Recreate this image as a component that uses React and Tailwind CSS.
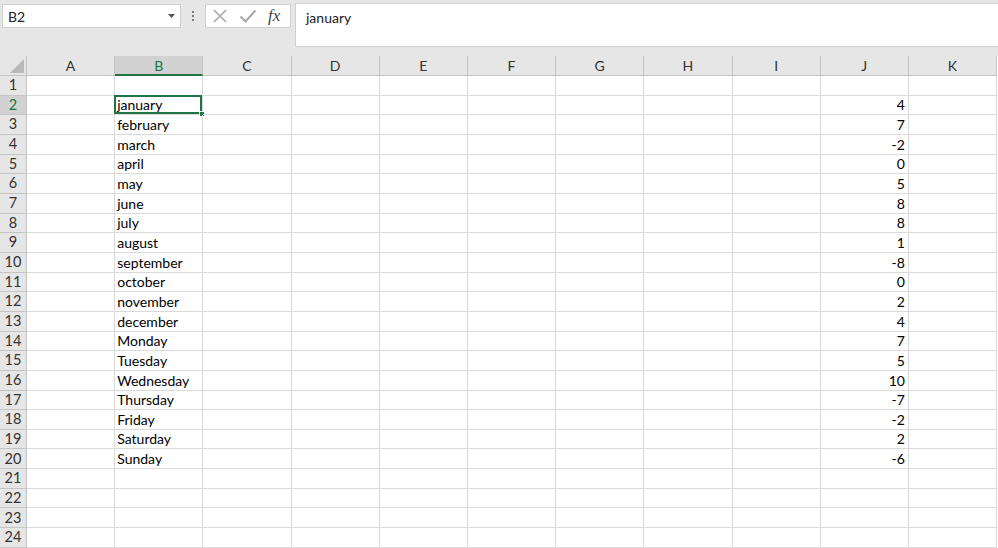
import React from 'react';

const COLS = ['A', 'B', 'C', 'D', 'E', 'F', 'G', 'H', 'I', 'J', 'K'];

const NAMES = [
  'january', 'february', 'march', 'april', 'may', 'june', 'july', 'august',
  'september', 'october', 'november', 'december',
  'Monday', 'Tuesday', 'Wednesday', 'Thursday', 'Friday', 'Saturday', 'Sunday',
];
const VALUES = [4, 7, -2, 0, 5, 8, 8, 1, -8, 0, 2, 4, 7, 5, 10, -7, -2, 2, -6];

const FormulaBar = () => (
  <div className="h-[56px] bg-[#e6e6e6] flex items-start pl-[2px] pt-[4px]">
    {/* Name box */}
    <div className="w-[179px] h-[24px] bg-white border border-[#d0d0d0] flex items-center justify-between pl-[5px] pr-[5px] text-[14px] text-[#222]">
      <span>B2</span>
      <svg width="7" height="4" viewBox="0 0 7 4">
        <path d="M0 0 L7 0 L3.5 4 Z" fill="#555" />
      </svg>
    </div>

    {/* Grip dots */}
    <div className="w-[24px] h-[24px] flex flex-col items-center justify-center gap-[2px]">
      <span className="w-[2px] h-[2px] bg-[#777]" />
      <span className="w-[2px] h-[2px] bg-[#777]" />
      <span className="w-[2px] h-[2px] bg-[#777]" />
    </div>

    {/* Cancel / enter / fx */}
    <div className="w-[86px] h-[24px] bg-white border border-[#d0d0d0] flex items-center pl-[6px] gap-[11px]">
      <svg width="16" height="16" viewBox="0 0 16 16">
        <path d="M2 2 L14 14 M14 2 L2 14" stroke="#a8a8a8" strokeWidth="1.6" fill="none" />
      </svg>
      <svg width="18" height="16" viewBox="0 0 18 16">
        <path d="M1.5 8.5 L6.5 13.5 L16.5 2.5" stroke="#a8a8a8" strokeWidth="2.2" fill="none" />
      </svg>
      <span className="font-['Liberation_Serif',serif] italic text-[17px] text-[#444] leading-none -mt-[2px]">fx</span>
    </div>

    {/* Formula input */}
    <div className="ml-[4px] -mt-[1px] flex-1 h-[44px] bg-white border border-[#d0d0d0] border-r-0 pl-[10px] pt-[3px] text-[14px] text-[#222]">
      january
    </div>
  </div>
);

const HeaderRow = () => (
  <div className="flex h-[20px]">
    <div className="w-[27px] shrink-0 bg-[#e6e6e6] border-r border-b border-[#c4c4c4] flex items-end justify-end p-[2px]">
      <svg width="14" height="14" viewBox="0 0 14 14">
        <path d="M14 0 L14 14 L0 14 Z" fill="#b9b9b9" />
      </svg>
    </div>
    {COLS.map((c) => {
      const sel = c === 'B';
      return (
        <div
          key={c}
          className={`w-[88.2px] shrink-0 flex items-center justify-center text-[14px] border-r ${
            sel
              ? 'bg-[#d2d2d2] text-[#217346] border-[#c4c4c4] border-b-2 border-b-[#217346]'
              : 'bg-[#e6e6e6] text-[#333] border-[#c4c4c4] border-b'
          }`}
        >
          {c}
        </div>
      );
    })}
  </div>
);

const Row = ({ n }) => {
  const idx = n - 2;
  const name = idx >= 0 && idx < NAMES.length ? NAMES[idx] : '';
  const val = idx >= 0 && idx < VALUES.length ? VALUES[idx] : '';
  const sel = n === 2;
  return (
    <div className="flex h-[19.67px]">
      <div
        className={`w-[27px] shrink-0 border-r border-b border-[#c4c4c4] flex items-end justify-center pb-[2px] text-[14.5px] leading-none ${
          sel ? 'bg-[#d2d2d2] text-[#217346]' : 'bg-[#e6e6e6] text-[#333]'
        }`}
      >
        {n}
      </div>
      {COLS.map((c) => (
        <div
          key={c}
          className={`relative w-[88.2px] shrink-0 border-r border-b border-[#dadada] flex items-end pb-[2px] pl-[2px] pr-[3px] text-[14px] leading-none text-black ${
            c === 'J' ? 'justify-end' : 'justify-start'
          }`}
        >
          {c === 'B' && name}
          {c === 'J' && val}
          {c === 'B' && sel && (
            <>
              <div className="absolute -left-[1px] -top-[1px] right-0 bottom-0 border-2 border-[#217346]" />
              <div className="absolute -right-[3px] -bottom-[3px] w-[6px] h-[6px] bg-[#217346] border border-white" />
            </>
          )}
        </div>
      ))}
    </div>
  );
};

export default function App() {
  const rows = Array.from({ length: 24 }, (_, i) => i + 1);
  return (
    <div className="w-[998px] h-[548px] overflow-hidden bg-white font-['Lato','Liberation_Sans',sans-serif]">
      <FormulaBar />
      <HeaderRow />
      {rows.map((n) => (
        <Row key={n} n={n} />
      ))}
    </div>
  );
}
